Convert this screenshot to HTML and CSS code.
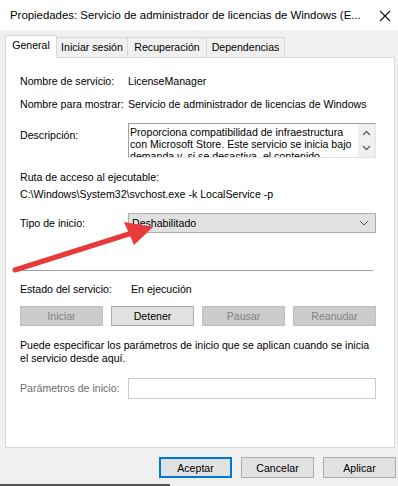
FILE: index.html
```html
<!DOCTYPE html>
<html lang="es">
<head>
  <meta charset="UTF-8" />
  <title>Propiedades: Servicio de administrador de licencias de Windows</title>
  <link rel="stylesheet" href="styles.css">
</head>
<body>
  <div class="titlebar">
    <span class="title">Propiedades: Servicio de administrador de licencias de Windows (E...</span>
    <span class="close">
      <svg width="12" height="12" viewBox="0 0 12 12"><path d="M1 1 L11 11 M11 1 L1 11" stroke="#111" stroke-width="1.1" fill="none"/></svg>
    </span>
  </div>

  <div class="tabs">
    <div class="tab active">General</div>
    <div class="tab">Iniciar sesión</div>
    <div class="tab">Recuperación</div>
    <div class="tab">Dependencias</div>
  </div>

  <div class="panel">
    <div class="row r1">
      <div class="label">Nombre de servicio:</div>
      <div class="value">LicenseManager</div>
    </div>
    <div class="row r2">
      <div class="label">Nombre para mostrar:</div>
      <div class="value">Servicio de administrador de licencias de Windows</div>
    </div>
    <div class="row r3">
      <div class="label desc-label">Descripción:</div>
      <div class="desc">
        <div class="desc-text">Proporciona compatibilidad de infraestructura<br>con Microsoft Store. Este servicio se inicia bajo<br>demanda y, si se desactiva, el contenido</div>
        <div class="scroll">
          <svg width="9" height="6" viewBox="0 0 9 6"><path d="M1 5 L4.5 1.5 L8 5" stroke="#606060" stroke-width="1.3" fill="none"/></svg>
          <svg width="9" height="6" viewBox="0 0 9 6"><path d="M1 1 L4.5 4.5 L8 1" stroke="#606060" stroke-width="1.3" fill="none"/></svg>
        </div>
      </div>
    </div>
    <div class="path-label">Ruta de acceso al ejecutable:</div>
    <div class="path">C:\Windows\System32\svchost.exe -k LocalService -p</div>
    <div class="row r4">
      <div class="label">Tipo de inicio:</div>
      <div class="select">
        <span>Deshabilitado</span>
        <svg width="10" height="6" viewBox="0 0 10 6"><path d="M1 1 L5 5 L9 1" stroke="#555" stroke-width="1" fill="none"/></svg>
      </div>
    </div>
    <div class="separator"></div>
    <div class="row r5">
      <div class="label">Estado del servicio:</div>
      <div class="value status">En ejecución</div>
    </div>
    <div class="actions">
      <button class="btn disabled">Iniciar</button>
      <button class="btn">Detener</button>
      <button class="btn disabled">Pausar</button>
      <button class="btn disabled">Reanudar</button>
    </div>
    <p class="note">Puede especificar los parámetros de inicio que se aplican cuando se inicia<br>el servicio desde aquí.</p>
    <div class="row r6">
      <div class="label muted">Parámetros de inicio:</div>
      <div class="input"></div>
    </div>
  </div>

  <div class="footer">
    <button class="btn big primary">Aceptar</button>
    <button class="btn big">Cancelar</button>
    <button class="btn big">Aplicar</button>
  </div>
  <div class="taskbar"></div>

  <svg class="arrow" width="398" height="486" viewBox="0 0 398 486">
    <path d="M15 270 L132 233" stroke="#e8393b" stroke-width="5" stroke-linecap="round" fill="none"/>
    <path d="M153 227 L124 222 L134 245 Z" fill="#e8393b"/>
  </svg>
</body>
</html>
```

FILE: styles.css
```css
body {
  margin: 0;
  width: 398px;
  height: 486px;
  overflow: hidden;
  background: #f0f0f0;
  font-family: "Liberation Sans", Arial, sans-serif;
  font-size: 10.6px;
  color: #000;
  white-space: nowrap;
  position: relative;
}
.titlebar {
  height: 30px;
  background: #fff;
  display: flex;
  align-items: center;
  justify-content: space-between;
  padding: 0 7px 0 10px;
}
.title {
  font-size: 11.4px;
  color: #000;
}
.close {
  display: flex;
  margin-top: 1px;
}
.tabs {
  display: flex;
  align-items: flex-end;
  margin-top: 5px;
  padding-left: 5px;
  height: 22px;
}
.tab {
  height: 20px;
  line-height: 19px;
  border: 1px solid #d9d9d9;
  border-bottom: none;
  border-left: none;
  box-sizing: border-box;
  background: #f0f0f0;
  text-align: center;
}
.tab.active {
  height: 23px;
  line-height: 19px;
  background: #fff;
  border-left: 1px solid #d9d9d9;
  width: 52px;
  position: relative;
  z-index: 1;
  margin-bottom: -1px;
}
.tab:nth-child(2) { width: 71px; }
.tab:nth-child(3) { width: 79px; }
.tab:nth-child(4) { width: 78px; }
.panel {
  margin-left: 5px;
  width: 390px;
  height: 391px;
  box-sizing: border-box;
  background: #fff;
  border: 1px solid #d9d9d9;
  padding: 16px 0 0 14px;
}
.row {
  display: flex;
  align-items: center;
}
.label {
  width: 108px;
  line-height: 15px;
  flex-shrink: 0;
}
.value {
  line-height: 15px;
}
.r2 { margin-top: 8px; }
.r3 {
  margin-top: 11px;
  align-items: flex-start;
}
.desc-label { padding-top: 5px; }
.desc {
  width: 248px;
  height: 35px;
  box-sizing: border-box;
  border: 1px solid #a0a0a0;
  border-right-color: #e3e3e3;
  border-bottom-color: #e3e3e3;
  display: flex;
  overflow: hidden;
}
.desc-text {
  flex: 1;
  padding: 2px 0 0 1px;
  line-height: 12px;
  height: 31px;
  overflow: hidden;
}
.scroll {
  width: 17px;
  background: #f0f0f0;
  display: flex;
  flex-direction: column;
  align-items: center;
  justify-content: space-between;
  padding: 6px 0 6px;
  box-sizing: border-box;
}
.path-label {
  margin-top: 12px;
  line-height: 15px;
}
.path {
  line-height: 16px;
  margin-top: 1px;
}
.r4 { margin-top: 11px; }
.select {
  width: 248px;
  height: 20px;
  box-sizing: border-box;
  border: 1px solid #adadad;
  background: #e1e1e1;
  display: flex;
  align-items: center;
  justify-content: space-between;
  padding: 0 6px 0 3px;
}
.separator {
  margin-top: 37px;
  width: 353px;
  height: 1px;
  background: #a0a0a0;
}
.r5 { margin-top: 11px; }
.status { padding-left: 3px; }
.actions {
  display: flex;
  gap: 8px;
  margin-top: 9px;
}
.btn {
  width: 83px;
  height: 20px;
  padding: 0;
  font-family: "Liberation Sans", Arial, sans-serif;
  font-size: 10.6px;
  background: #e1e1e1;
  border: 1px solid #adadad;
  color: #000;
}
.btn.disabled {
  background: #cccccc;
  border-color: #bfbfbf;
  color: #838383;
}
.note {
  margin: 13px 0 0;
  line-height: 13px;
}
.r6 { margin-top: 13px; }
.muted { color: #6d6d6d; }
.input {
  width: 248px;
  height: 21px;
  box-sizing: border-box;
  border: 1px solid #c9c9c9;
  background: #fff;
}
.footer {
  display: flex;
  justify-content: flex-end;
  gap: 9px;
  padding-right: 2px;
  margin-top: 9px;
}
.btn.big {
  width: 73px;
  height: 21px;
}
.btn.primary {
  border: 2px solid #0078d7;
}
.taskbar {
  position: absolute;
  left: 0;
  bottom: 0;
  width: 170px;
  height: 2px;
  background: #555;
}
.arrow {
  position: absolute;
  left: 0;
  top: 0;
  pointer-events: none;
}
```
